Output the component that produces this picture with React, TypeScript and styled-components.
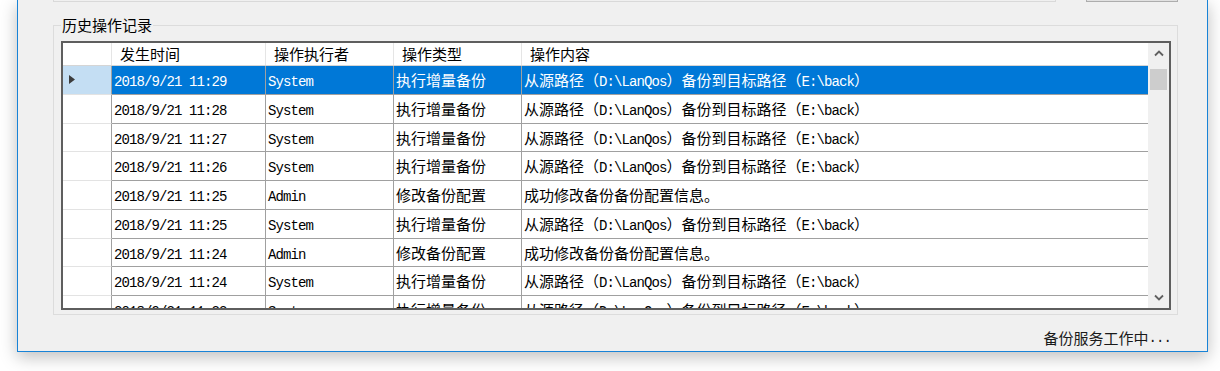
import React from "react";
import styled, { createGlobalStyle } from "styled-components";

const GlobalStyle = createGlobalStyle`
  html, body { margin: 0; padding: 0; background: #ffffff; }
  body { font-family: "Noto Sans CJK SC", "Noto Sans", sans-serif; color: #000; }
  #root { width: 1220px; height: 371px; overflow: hidden; }
`;

const COLS = "49px 154px 128px 128px 1fr";

const Window = styled.div`
  box-sizing: border-box;
  margin-left: 17px;
  width: 1191px;
  height: 352px;
  background: #f0f0f0;
  border: 1px solid #1883d7;
  border-top: none;
  box-shadow: 0 5px 16px rgba(0, 0, 0, 0.26);
  padding: 0 29px 0 35px;
  display: flex;
  flex-direction: column;
`;

const TopStrip = styled.div`
  display: flex;
  align-items: flex-start;
  gap: 30px;
  height: 3px;
`;

const TextStub = styled.div`
  box-sizing: border-box;
  width: 1003px;
  height: 2px;
  border: 1px solid #d9d9d9;
  border-top: none;
`;

const ButtonStub = styled.div`
  box-sizing: border-box;
  width: 92px;
  height: 2px;
  background: #e1e1e1;
  border: 1px solid #adadad;
  border-top: none;
`;

const Group = styled.fieldset`
  margin: 12px 0 0;
  padding: 6px 6px 4px 7px;
  border: 1px solid #dcdcdc;
  min-width: 0;
`;

const Legend = styled.legend`
  padding: 0 1px;
  font-size: 15px;
  line-height: 20px;
  color: #000;
`;

const Grid = styled.div`
  box-sizing: border-box;
  height: 269px;
  border: 2px solid #5e5e5e;
  background: #ffffff;
  display: flex;
`;

const Table = styled.div`
  flex: 1;
  min-width: 0;
  display: flex;
  flex-direction: column;
  overflow: hidden;
`;

const HeaderRow = styled.div`
  flex-shrink: 0;
  display: grid;
  grid-template-columns: ${COLS};
  box-sizing: border-box;
  height: 23px;
  border-bottom: 1px solid #d5d5d5;
`;

const HeaderCell = styled.div`
  box-sizing: border-box;
  border-right: 1px solid #e5e5e5;
  padding-left: 8px;
  font-size: 15px;
  line-height: 21px;
  white-space: nowrap;
  overflow: hidden;
  &:last-child { border-right: none; }
`;

const Body = styled.div`
  flex: 1;
  overflow: hidden;
`;

const DataRow = styled.div`
  display: grid;
  grid-template-columns: ${COLS};
  height: 28.75px;
`;

const RowHeader = styled.div<{ $selected?: boolean }>`
  box-sizing: border-box;
  background: ${(p) => (p.$selected ? "#c4def3" : "#ffffff")};
  border-right: 1px solid #a0a0a0;
  border-bottom: 1px solid #e3e3e3;
  display: flex;
  align-items: center;
  padding-left: 6px;
`;

const DataCell = styled.div<{ $selected?: boolean }>`
  box-sizing: border-box;
  background: ${(p) => (p.$selected ? "#0078d7" : "#ffffff")};
  color: ${(p) => (p.$selected ? "#ffffff" : "#000000")};
  border-right: 1px solid #a0a0a0;
  border-bottom: 1px solid #a0a0a0;
  padding-left: 2px;
  font-size: 15px;
  line-height: 27px;
  white-space: nowrap;
  overflow: hidden;
  &:last-child { border-right: none; }
`;

const Latin = styled.span`
  font-family: "Liberation Mono", monospace;
  font-size: 14px;
  letter-spacing: -0.9px;
`;

const ScrollBar = styled.div`
  width: 21px;
  flex-shrink: 0;
  background: #f0f0f0;
  display: flex;
  flex-direction: column;
`;

const ArrowButton = styled.div`
  height: 21px;
  display: flex;
  align-items: center;
  justify-content: center;
`;

const Track = styled.div`
  flex: 1;
  padding: 5px 2px 0;
`;

const Thumb = styled.div`
  height: 21px;
  background: #cdcdcd;
`;

const StatusBar = styled.div`
  margin-top: 13px;
  padding-right: 7px;
  display: flex;
  justify-content: flex-end;
  font-size: 15px;
  line-height: 20px;
  color: #1a1a1a;
`;

const renderMixed = (text: string) =>
  text
    .split(/([\x20-\x7e]+)/)
    .filter(Boolean)
    .map((part, i) =>
      /^[\x20-\x7e]+$/.test(part) ? <Latin key={i}>{part}</Latin> : <span key={i}>{part}</span>
    );

const Chevron = ({ down }: { down?: boolean }) => (
  <svg width="10" height="7" viewBox="0 0 10 7">
    <path
      d={down ? "M1 1.5 L5 5.5 L9 1.5" : "M1 5.5 L5 1.5 L9 5.5"}
      fill="none"
      stroke="#606060"
      strokeWidth="1.8"
    />
  </svg>
);

const RowArrow = () => (
  <svg width="7" height="9" viewBox="0 0 7 9">
    <polygon points="0,0 6,4.5 0,9" fill="#3c3c3c" />
  </svg>
);

const BACKUP = "从源路径（D:\\LanQos）备份到目标路径（E:\\back）";
const CONFIG = "成功修改备份备份配置信息。";

const rows = [
  { time: "2018/9/21 11:29", user: "System", type: "执行增量备份", content: BACKUP },
  { time: "2018/9/21 11:28", user: "System", type: "执行增量备份", content: BACKUP },
  { time: "2018/9/21 11:27", user: "System", type: "执行增量备份", content: BACKUP },
  { time: "2018/9/21 11:26", user: "System", type: "执行增量备份", content: BACKUP },
  { time: "2018/9/21 11:25", user: "Admin", type: "修改备份配置", content: CONFIG },
  { time: "2018/9/21 11:25", user: "System", type: "执行增量备份", content: BACKUP },
  { time: "2018/9/21 11:24", user: "Admin", type: "修改备份配置", content: CONFIG },
  { time: "2018/9/21 11:24", user: "System", type: "执行增量备份", content: BACKUP },
  { time: "2018/9/21 11:23", user: "System", type: "执行增量备份", content: BACKUP },
];

export default function App() {
  return (
    <>
      <GlobalStyle />
      <Window>
        <TopStrip>
          <TextStub />
          <ButtonStub />
        </TopStrip>
        <Group>
          <Legend>历史操作记录</Legend>
          <Grid>
            <Table>
              <HeaderRow>
                <HeaderCell />
                <HeaderCell>发生时间</HeaderCell>
                <HeaderCell>操作执行者</HeaderCell>
                <HeaderCell>操作类型</HeaderCell>
                <HeaderCell>操作内容</HeaderCell>
              </HeaderRow>
              <Body>
                {rows.map((r, i) => {
                  const sel = i === 0;
                  return (
                    <DataRow key={i}>
                      <RowHeader $selected={sel}>{sel && <RowArrow />}</RowHeader>
                      <DataCell $selected={sel}>{renderMixed(r.time)}</DataCell>
                      <DataCell $selected={sel}>{renderMixed(r.user)}</DataCell>
                      <DataCell $selected={sel}>{renderMixed(r.type)}</DataCell>
                      <DataCell $selected={sel}>{renderMixed(r.content)}</DataCell>
                    </DataRow>
                  );
                })}
              </Body>
            </Table>
            <ScrollBar>
              <ArrowButton>
                <Chevron />
              </ArrowButton>
              <Track>
                <Thumb />
              </Track>
              <ArrowButton>
                <Chevron down />
              </ArrowButton>
            </ScrollBar>
          </Grid>
        </Group>
        <StatusBar>
          <span>备份服务工作中</span>
          <Latin>...</Latin>
        </StatusBar>
      </Window>
    </>
  );
}
